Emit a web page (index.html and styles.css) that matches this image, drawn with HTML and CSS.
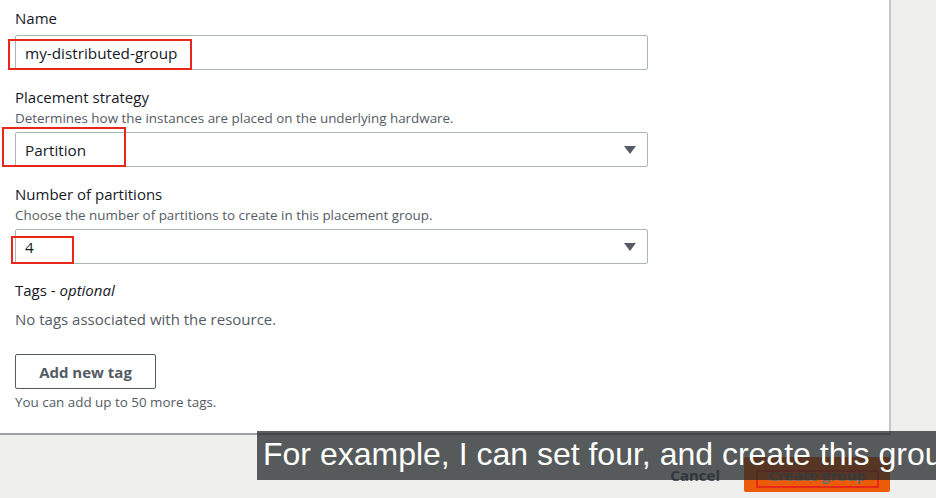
FILE: index.html
```html
<!DOCTYPE html>
<html>
<head>
<meta charset="utf-8">
<link rel="stylesheet" href="styles.css">
</head>
<body>
<div class="page">
  <section class="panel">
    <div class="field">
      <label class="label">Name</label>
      <div class="control">
        <span class="value">my-distributed-group</span>
        <span class="mark mark-name"></span>
      </div>
    </div>
    <div class="field">
      <label class="label">Placement strategy</label>
      <div class="desc">Determines how the instances are placed on the underlying hardware.</div>
      <div class="control select">
        <span class="value">Partition</span>
        <svg class="caret" width="12" height="8" viewBox="0 0 12 8"><path d="M0 0H12L6 8Z" fill="#545b64"/></svg>
        <span class="mark mark-strategy"></span>
      </div>
    </div>
    <div class="field">
      <label class="label">Number of partitions</label>
      <div class="desc">Choose the number of partitions to create in this placement group.</div>
      <div class="control select">
        <span class="value">4</span>
        <svg class="caret" width="12" height="8" viewBox="0 0 12 8"><path d="M0 0H12L6 8Z" fill="#545b64"/></svg>
        <span class="mark mark-count"></span>
      </div>
    </div>
    <div class="field tags">
      <label class="label">Tags - <i>optional</i></label>
      <div class="empty">No tags associated with the resource.</div>
      <button class="btn-secondary">Add new tag</button>
      <div class="desc hint">You can add up to 50 more tags.</div>
    </div>
  </section>
  <footer class="actions">
    <button class="btn-link">Cancel</button>
    <button class="btn-primary">Create group<span class="mark mark-create"></span></button>
  </footer>
  <div class="caption">For example, I can set four, and create this group.</div>
</div>
</body>
</html>
```

FILE: styles.css
```css
* { box-sizing: border-box; }
html, body { margin: 0; padding: 0; }
body {
  background: #eff0ee;
  font-family: "Open Sans", "Noto Sans", sans-serif;
  color: #16191f;
  width: 936px;
  height: 498px;
  overflow: hidden;
}
.page { position: relative; width: 936px; height: 498px; }
.panel {
  width: 891px;
  height: 435px;
  background: #fff;
  border-right: 2px solid #c4c8c9;
  border-bottom: 2px solid #9ba3a5;
  padding: 7px 0 0 15px;
  display: flex;
  flex-direction: column;
}
.field { display: flex; flex-direction: column; margin-bottom: 16px; width: 633px; }
.label { font-size: 15px; line-height: 22px; margin-bottom: 6px; }
.label + .desc { margin-top: -5px; }
.desc { font-size: 13.4px; line-height: 18px; color: #545b64; margin-bottom: 5px; }
.control {
  position: relative;
  height: 35px;
  flex: none;
  border: 1px solid #aab7b8;
  border-radius: 2px;
  display: flex;
  align-items: center;
  padding: 0 9px;
  font-size: 15.3px;
}
.select { justify-content: space-between; padding-right: 11px; }
.caret { display: block; }
.mark {
  position: absolute;
  border: 2px solid #e8261c;
  pointer-events: none;
}
.mark-name { left: -8px; top: 3px; width: 184px; height: 31px; }
.mark-strategy { left: -14px; top: -6px; width: 124px; height: 40px; }
.mark-count { left: -5px; top: 6px; width: 63px; height: 28px; }
.tags { margin-top: -1px; }
.tags .label { margin-bottom: 8px; }
.empty { font-size: 15px; line-height: 20px; color: #545b64; margin-bottom: 25px; }
.btn-secondary {
  align-self: flex-start;
  width: 141px;
  height: 35px;
  flex: none;
  border: 1px solid #545b64;
  border-radius: 2px;
  background: #fff;
  color: #545b64;
  font-family: inherit;
  font-weight: 700;
  font-size: 15px;
  margin-bottom: 4px;
}
.hint { margin-top: 0; }
.actions {
  display: flex;
  justify-content: flex-end;
  align-items: center;
  gap: 24px;
  width: 890px;
  margin-top: 22px;
}
.btn-link {
  border: 0;
  background: none;
  font-family: inherit;
  font-weight: 700;
  font-size: 15px;
  color: #545b64;
  padding: 0;
}
.btn-primary {
  position: relative;
  width: 146px;
  height: 35px;
  border: 0;
  border-radius: 2px;
  background: #ec5b07;
  color: #6d6d6d;
  font-family: inherit;
  font-weight: 700;
  font-size: 15px;
}
.mark-create { left: 12px; top: 13px; width: 123px; height: 18px; }
.caption {
  position: absolute;
  left: 257px;
  top: 431px;
  width: 700px;
  height: 49px;
  padding-left: 6px;
  background: rgba(38, 42, 45, 0.76);
  color: #fff;
  font-family: "Liberation Sans", Arial, sans-serif;
  font-size: 32px;
  line-height: 47px;
  white-space: nowrap;
  overflow: hidden;
}
```
